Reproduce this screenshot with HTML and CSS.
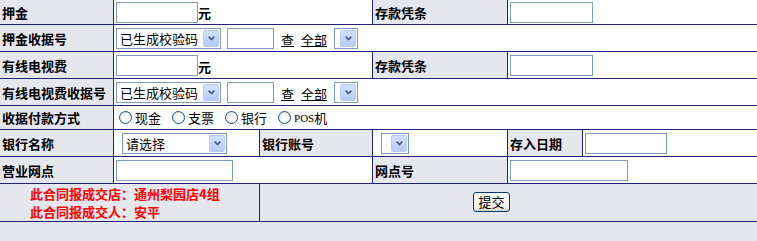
FILE: index.html
```html
<!DOCTYPE html>
<html lang="zh-CN">
<head>
    <meta charset="UTF-8">
    <title>押金登记</title>
    <link rel="stylesheet" href="styles.css">
</head>
<body>
    <form class="form-grid">
        <!-- 押金 -->
        <div class="cell label">押金</div>
        <div class="cell value span-2">
            <input type="text" class="text w-82">
            <span class="unit">元</span>
        </div>
        <div class="cell label">存款凭条</div>
        <div class="cell value span-2"><input type="text" class="text w-83"></div>

        <div class="cell label">押金收据号</div>
        <div class="cell value span-5">
            <label class="select w-105">
                <select><option>已生成校验码</option></select>
                <span class="select-btn"><svg width="7" height="5" viewBox="0 0 7 5"><path d="M0.7 0.7 L3.5 3.6 L6.3 0.7" stroke="#4b5f86" stroke-width="1.7" fill="none"/></svg></span>
            </label>
            <input type="text" class="text w-47">
            <a href="#" class="link">查</a>
            <a href="#" class="link">全部</a>
            <label class="select w-24">
                <select><option></option></select>
                <span class="select-btn"><svg width="7" height="5" viewBox="0 0 7 5"><path d="M0.7 0.7 L3.5 3.6 L6.3 0.7" stroke="#4b5f86" stroke-width="1.7" fill="none"/></svg></span>
            </label>
        </div>

        <!-- 有线电视费 -->
        <div class="cell label">有线电视费</div>
        <div class="cell value span-2">
            <input type="text" class="text w-82">
            <span class="unit">元</span>
        </div>
        <div class="cell label">存款凭条</div>
        <div class="cell value span-2"><input type="text" class="text w-83"></div>

        <div class="cell label">有线电视费收据号</div>
        <div class="cell value span-5">
            <label class="select w-105">
                <select><option>已生成校验码</option></select>
                <span class="select-btn"><svg width="7" height="5" viewBox="0 0 7 5"><path d="M0.7 0.7 L3.5 3.6 L6.3 0.7" stroke="#4b5f86" stroke-width="1.7" fill="none"/></svg></span>
            </label>
            <input type="text" class="text w-47">
            <a href="#" class="link">查</a>
            <a href="#" class="link">全部</a>
            <label class="select w-24">
                <select><option></option></select>
                <span class="select-btn"><svg width="7" height="5" viewBox="0 0 7 5"><path d="M0.7 0.7 L3.5 3.6 L6.3 0.7" stroke="#4b5f86" stroke-width="1.7" fill="none"/></svg></span>
            </label>
        </div>

        <div class="cell label">收据付款方式</div>
        <div class="cell value span-5 radios">
            <label class="radio"><input type="radio" name="pay"><span>现金</span></label>
            <label class="radio"><input type="radio" name="pay"><span>支票</span></label>
            <label class="radio"><input type="radio" name="pay"><span>银行</span></label>
            <label class="radio"><input type="radio" name="pay"><span class="pos">POS</span><span>机</span></label>
        </div>

        <!-- 银行 -->
        <div class="cell label">银行名称</div>
        <div class="cell value">
            <label class="select w-105 indent">
                <select><option>请选择</option></select>
                <span class="select-btn"><svg width="7" height="5" viewBox="0 0 7 5"><path d="M0.7 0.7 L3.5 3.6 L6.3 0.7" stroke="#4b5f86" stroke-width="1.7" fill="none"/></svg></span>
            </label>
        </div>
        <div class="cell label">银行账号</div>
        <div class="cell value">
            <label class="select w-28 indent">
                <select><option></option></select>
                <span class="select-btn"><svg width="7" height="5" viewBox="0 0 7 5"><path d="M0.7 0.7 L3.5 3.6 L6.3 0.7" stroke="#4b5f86" stroke-width="1.7" fill="none"/></svg></span>
            </label>
        </div>
        <div class="cell label">存入日期</div>
        <div class="cell value"><input type="text" class="text w-82"></div>

        <div class="cell label">营业网点</div>
        <div class="cell value span-2"><input type="text" class="text w-117"></div>
        <div class="cell label">网点号</div>
        <div class="cell value span-2"><input type="text" class="text w-118"></div>

        <div class="cell footer-note span-2">
            <p>此合同报成交店：通州梨园店4组</p>
            <p>此合同报成交人：安平</p>
        </div>
        <div class="cell footer-action span-4">
            <button type="button" class="btn">提交</button>
        </div>
    </form>
</body>
</html>
```

FILE: styles.css
```css
body {
    margin: 0;
    background-color: #e6e7ec;
    font-family: "Noto Sans CJK SC", "Liberation Sans", sans-serif;
    font-size: 13px;
    color: #000;
}
.form-grid {
    display: grid;
    grid-template-columns: 113px 145px 112px 134px 74px 1fr;
    grid-template-rows: 24px 26px 26px 26px 23px 26px 26px 37px;
    gap: 1px;
    background-color: #22227a;
    border-bottom: 1px solid #22227a;
}
.cell {
    display: flex;
    align-items: center;
    padding-left: 2px;
    min-width: 0;
}
.span-2 { grid-column: span 2; }
.span-4 { grid-column: span 4; }
.span-5 { grid-column: span 5; }
.label {
    background-color: #e6e7ec;
    font-weight: bold;
    white-space: nowrap;
}
.value {
    background-color: #fff;
}

/* inputs */
.text {
    box-sizing: border-box;
    height: 21px;
    margin: 0;
    padding: 0 2px;
    border: 1px solid #7f9db9;
    background: #fff;
    font: inherit;
}
.w-47 { width: 47px; margin-left: 6px; }
.w-82 { width: 82px; }
.w-83 { width: 83px; }
.w-117 { width: 117px; }
.w-118 { width: 118px; }
.unit {
    font-weight: bold;
    align-self: flex-end;
    line-height: 16px;
    margin-bottom: 3px;
}
.link {
    color: #000;
    text-decoration: underline;
    align-self: flex-end;
    line-height: 16px;
    margin-bottom: 3px;
    margin-left: 7px;
}

/* selects */
.select {
    box-sizing: border-box;
    display: inline-flex;
    align-items: center;
    height: 21px;
    border: 1px solid #7f9db9;
    background: #fff;
}
.select select {
    flex: 1;
    min-width: 0;
    height: 100%;
    margin: 0;
    padding: 0 0 0 3px;
    border: none;
    background: transparent;
    font: inherit;
    color: #000;
    appearance: none;
    -webkit-appearance: none;
}
.select-btn {
    box-sizing: border-box;
    display: flex;
    align-items: center;
    justify-content: center;
    width: 16px;
    height: 17px;
    margin-right: 1px;
    border: 1px solid #b9cbf3;
    border-radius: 2px;
    background: linear-gradient(#d2e0fd, #b6cbf7);
}
.w-105 { width: 105px; }
.w-24 { width: 24px; margin-left: 7px; }
.w-28 { width: 28px; }
.indent { margin-left: 6px; }

/* radios */
.radios {
    padding-left: 5px;
}
.radio {
    display: flex;
    align-items: center;
    margin-right: 11px;
}
.radio input {
    appearance: none;
    -webkit-appearance: none;
    box-sizing: border-box;
    width: 13px;
    height: 13px;
    margin: 0 3px 0 0;
    border: 1px solid #1d5280;
    border-radius: 50%;
    background: radial-gradient(circle at 60% 65%, #fff 30%, #d6d6cc 100%);
}
.pos {
    font-family: "Liberation Serif", serif;
    font-size: 11px;
}

/* footer */
.footer-note {
    background-color: #e6e7ec;
    flex-direction: column;
    align-items: flex-start;
    justify-content: center;
    padding-left: 30px;
    color: #f00;
    font-weight: bold;
}
.footer-note p {
    margin: 0;
    line-height: 18px;
}
.footer-action {
    background-color: #e6e7ec;
    padding-left: 213px;
}
.btn {
    box-sizing: border-box;
    width: 37px;
    height: 20px;
    padding: 0;
    border: 1px solid #003c74;
    border-radius: 3px;
    background: linear-gradient(#fff, #ecebe6 85%, #d6d0c5);
    font: inherit;
    line-height: 16px;
    color: #000;
    margin-top: -1px;
}
```
